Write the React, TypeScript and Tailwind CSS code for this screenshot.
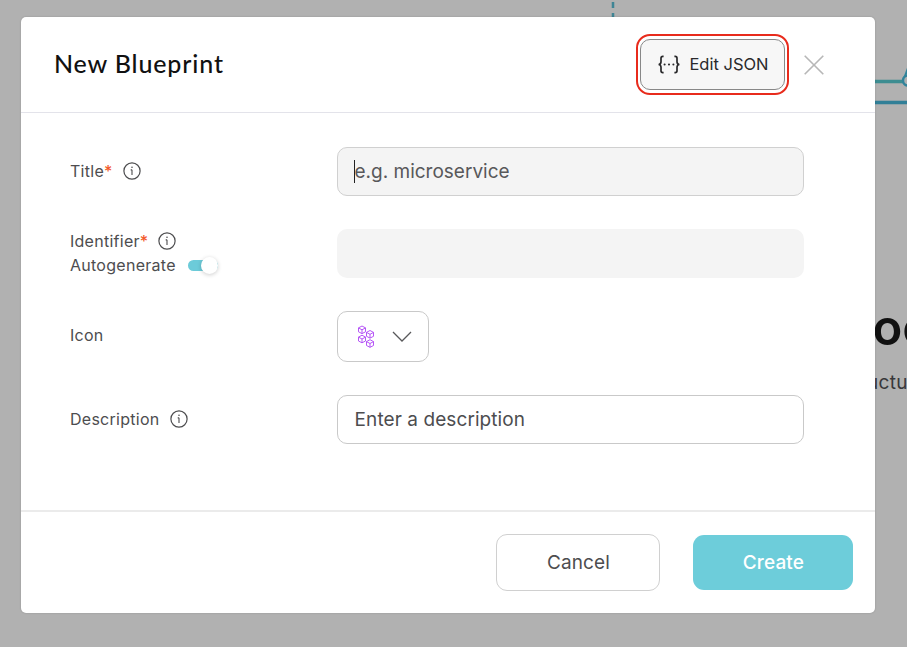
import type { ReactNode } from "react";

function InfoIcon() {
  return (
    <svg width="18" height="18" viewBox="0 0 18 18" fill="none" stroke="#4d4d4f" strokeWidth="1.2">
      <circle cx="9" cy="9" r="8.1" />
      <path d="M9 7.7v5.3M7.7 7.9H9" strokeWidth="1.1" />
      <circle cx="9" cy="5.3" r=".8" fill="#4d4d4f" stroke="none" />
    </svg>
  );
}

function BracesIcon() {
  return (
    <svg width="24" height="20" viewBox="0 0 24 20" fill="none" stroke="#29292b" strokeWidth="1.7">
      <path d="M6.6 1.4H5.9C4.6 1.4 4 2.1 4 3.3V6.8C4 8.6 3.2 9.4 1.6 9.5C3.2 9.7 4 10.4 4 12.2V15.8C4 17 4.6 17.7 5.9 17.7H6.6" />
      <path d="M17.4 1.4H18.1C19.4 1.4 20 2.1 20 3.3V6.8C20 8.6 20.8 9.4 22.4 9.5C20.8 9.7 20 10.4 20 12.2V15.8C20 17 19.4 17.7 18.1 17.7H17.4" />
      <g fill="#29292b" stroke="none">
        <circle cx="7.6" cy="9.5" r="1.05" />
        <circle cx="12" cy="9.5" r="1.05" />
        <circle cx="16.4" cy="9.5" r="1.05" />
      </g>
    </svg>
  );
}

function Cube({ x, y }: { x: number; y: number }) {
  return (
    <g transform={`translate(${x} ${y})`}>
      <path d="M0 -3.8L3.5 -1.9V2L0 3.8L-3.5 2V-1.9Z" />
      <path d="M-3.5 -1.9L0 0L3.5 -1.9M0 0V3.8" />
    </g>
  );
}

function CubesIcon() {
  return (
    <svg width="18" height="24" viewBox="0 0 18 24" fill="none" stroke="#b24df5" strokeWidth="0.95" strokeLinejoin="round">
      <Cube x={5} y={4.8} />
      <Cube x={13} y={9.3} />
      <Cube x={5} y={14} />
      <Cube x={13} y={18.5} />
    </svg>
  );
}

function Row({ label, height, children }: { label: ReactNode; height: string; children: ReactNode }) {
  return (
    <div className={`flex items-center ${height}`}>
      <div className="w-[267px] shrink-0 text-[16px] leading-[24px] tracking-[0.27px] text-[#4d4d4f]">{label}</div>
      {children}
    </div>
  );
}

function Backdrop() {
  return (
    <div className="absolute inset-0 overflow-hidden">
      <svg className="absolute inset-0" width="907" height="647" fill="none">
        <path d="M613 2V8M613 13V19" stroke="#3f8595" strokeWidth="2.5" />
        <path d="M870 81.5H903" stroke="#3d8d91" strokeWidth="3.5" />
        <path d="M870 102.5H907" stroke="#317f97" strokeWidth="3.5" />
        <circle cx="908" cy="80.5" r="5" stroke="#31839a" strokeWidth="2.5" />
        <path d="M905 76L908 68" stroke="#31839a" strokeWidth="2" />
      </svg>
      <div className="absolute left-[872.5px] top-[303px] text-[49px] leading-[50px] font-semibold text-[#111]">oc</div>
      <div className="absolute left-[867px] top-[370px] text-[19px] leading-[26px] tracking-[0.3px] text-[#38383a]">uctu</div>
    </div>
  );
}

export default function App() {
  return (
    <div className="relative h-[647px] w-[907px] overflow-hidden bg-[#b1b1b1] pl-[20.6px] pt-[17px] font-['Inter',sans-serif]">
      <Backdrop />
      <section className="relative flex h-[596.4px] w-[854.6px] flex-col rounded-[5px] bg-white shadow-[0_0_2px_rgba(0,0,0,0.2)]">
        <header className="flex h-[96px] shrink-0 items-center border-b border-[#e3e3ea] pl-[33.4px] pr-[51.2px]">
          <h1 className="mb-[3px] flex-1 font-['Lato',sans-serif] text-[25px] leading-[30px] font-medium tracking-[0.85px] text-[#111]">New Blueprint</h1>
          <div className="rounded-[14px] border-2 border-[#e82b1c] bg-white p-[2px] pt-[3px] pb-[3px]">
            <button className="flex h-[51px] w-[145px] items-center justify-center gap-[8px] rounded-[10px] border border-[#888] bg-[#f7f7f7] pl-px text-[16.5px] whitespace-nowrap text-[#29292b]">
              <BracesIcon />
              Edit JSON
            </button>
          </div>
          <svg className="ml-[15px]" width="20" height="20" viewBox="0 0 20 20" fill="none" stroke="#b7b7b7" strokeWidth="1.6">
            <path d="M.7 .7L19.3 19.3M19.3 .7L.7 19.3" />
          </svg>
        </header>
        <main className="flex flex-1 flex-col gap-[33.5px] pl-[49.4px] pt-[33.5px]">
          <Row
            height="h-[49px]"
            label={
              <div className="flex items-center gap-[10.5px]">
                <span>Title<span className="font-medium text-[#f2592a]">*</span></span>
                <InfoIcon />
              </div>
            }
          >
            <div className="flex h-[49px] w-[467px] items-center rounded-[10px] border-[1.5px] border-[#d0d0d0] bg-[#f4f4f4] pl-[16.5px] text-[19px] text-[#58585a]">
              <span className="-mr-px h-[23px] w-px bg-[#222]" />
              <span className="pt-[2px]">e.g. microservice</span>
            </div>
          </Row>
          <Row
            height="h-[49px]"
            label={
              <div className="pb-px">
                <div className="flex items-center gap-[10px]">
                  <span>Identifier<span className="font-medium text-[#f2592a]">*</span></span>
                  <InfoIcon />
                </div>
                <div className="flex items-center gap-[12px]">
                  <span>Autogenerate</span>
                  <span className="flex h-[11px] w-[30px] items-center justify-end rounded-full bg-[#6ccbd9]">
                    <span className="h-[17px] w-[17px] shrink-0 rounded-full bg-white shadow-[0_1px_4px_rgba(0,0,0,0.2)]" />
                  </span>
                </div>
              </div>
            }
          >
            <div className="h-[49px] w-[467px] rounded-[10px] bg-[#f4f4f4]" />
          </Row>
          <Row height="h-[50px]" label={<div className="pb-[3px]">Icon</div>}>
            <button className="flex h-[50.5px] w-[92px] items-center gap-[17px] rounded-[10px] border border-[#c9c9c9] pl-[19px]">
              <CubesIcon />
              <svg width="20" height="12" viewBox="0 0 20 12" fill="none" stroke="#58585a" strokeWidth="1.3">
                <path d="M1 1L10 10L19 1" />
              </svg>
            </button>
          </Row>
          <Row
            height="h-[49px]"
            label={
              <div className="flex items-center gap-[10px] pb-px">
                <span>Description</span>
                <InfoIcon />
              </div>
            }
          >
            <div className="flex h-[49px] w-[467px] items-center rounded-[10px] border border-[#c9c9c9] pt-[2px] pl-[16.6px] text-[19px] tracking-[0.08px] text-[#4d4d4f]">
              Enter a description
            </div>
          </Row>
        </main>
        <footer className="flex h-[103.5px] shrink-0 items-center justify-end gap-[33px] border-t-2 border-[#ebebeb] pr-[21.8px]">
          <button className="h-[57px] w-[164px] rounded-[11px] border-[1.5px] border-[#d0d0d0] pt-px text-[19px] tracking-[0.1px] text-[#4d4d4f]">Cancel</button>
          <button className="h-[55px] w-[160px] rounded-[11px] bg-[#6dcdda] pt-px text-[19px] font-medium tracking-[0.1px] text-white">Create</button>
        </footer>
      </section>
    </div>
  );
}
